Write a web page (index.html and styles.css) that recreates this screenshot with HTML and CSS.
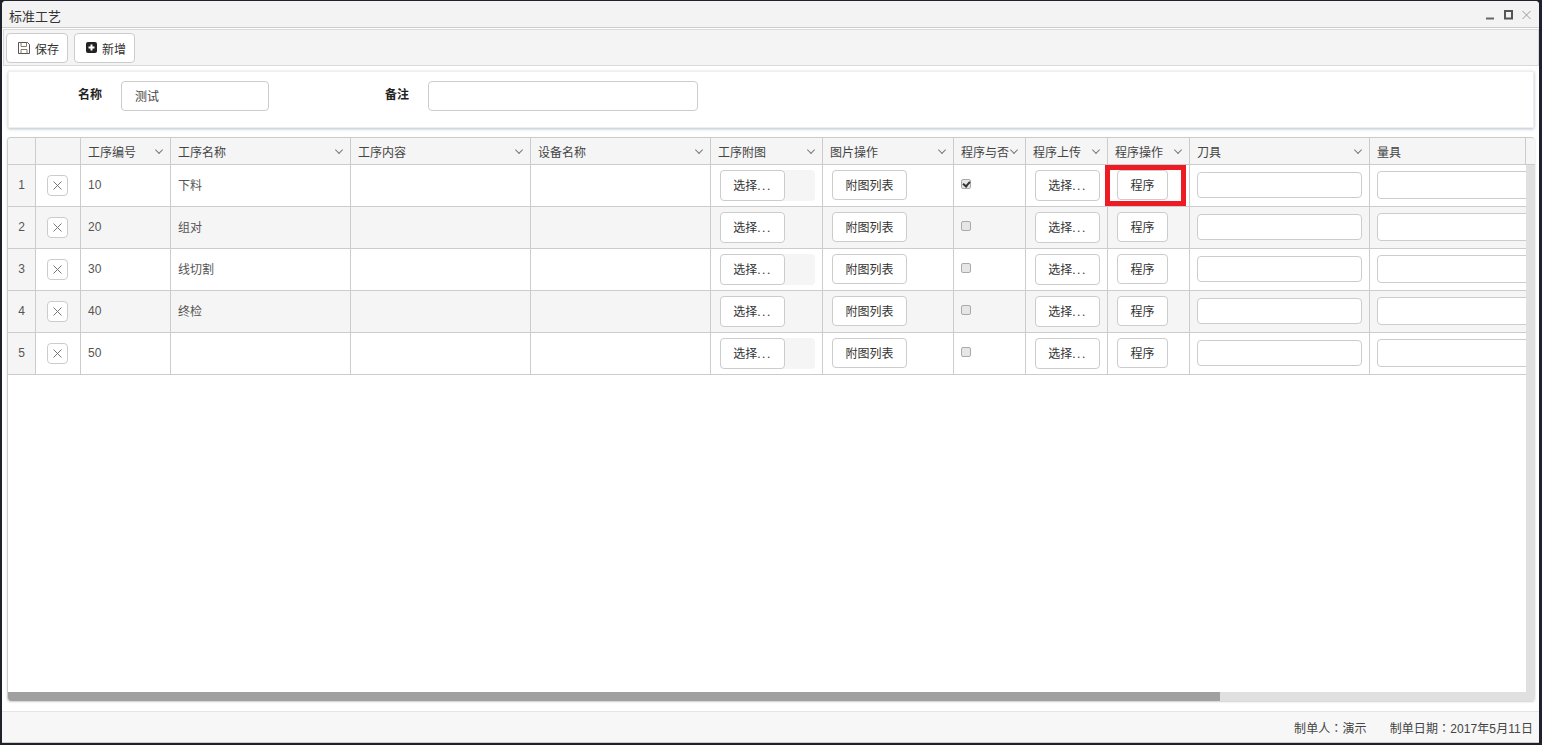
FILE: index.html
```html
<!DOCTYPE html>
<html>

<head>
<meta charset="UTF-8"/>
<title>标准工艺</title>
<link rel="stylesheet" href="styles.css">
</head>

<body>
<div class="window">

<div class="titlebar">
    <span class="title">标准工艺</span>
    <span class="win-btns">
        <svg class="win-min" width="8" height="10" viewBox="0 0 8 10"><path d="M0 8.500h8" stroke="#666" stroke-width="2"/></svg>
        <svg width="9" height="10" viewBox="0 0 9 10"><rect x="1" y="1" width="7" height="7.500" fill="none" stroke="#555" stroke-width="2"/></svg>
        <svg width="9" height="10" viewBox="0 0 9 10"><path d="M.5 1l8 8M8.500 1l-8 8" stroke="#999" stroke-width="1" fill="none"/></svg>
    </span>
</div>

<div class="toolbar">
    <button class="btn tool-btn">
        <svg width="12" height="12" viewBox="0 0 12 12"><path d="M.5.5h9l2 2v9H.5z" fill="none" stroke="#555"/><path d="M3 .5v4h5.500v-4M3 11.500V7.500h6v4" fill="none" stroke="#8a7a68"/></svg>
        保存
    </button>
    <button class="btn tool-btn">
        <svg width="11" height="12" viewBox="0 0 11 12"><rect width="11" height="11" rx="2" fill="#222"/><path d="M5.500 2.500v6M2.500 5.500h6" stroke="#fff" stroke-width="2"/></svg>
        新增
    </button>
</div>

<div class="main">
    <div class="form-panel">
        <label class="form-label first">名称</label>
        <input class="text-input name-input" type="text" value="测试">
        <label class="form-label">备注</label>
        <input class="text-input note-input" type="text">
    </div>

    <div class="grid">
        <div class="grid-top">
            <div class="viewport">
                <table class="sheet">
                    <colgroup>
                        <col class="c-no"><col class="c-del"><col class="c-code"><col class="c-wide"><col class="c-wide"><col class="c-wide">
                        <col class="c-pic"><col class="c-picop"><col class="c-flag"><col class="c-up"><col class="c-up"><col class="c-wide"><col class="c-last">
                    </colgroup>
                    <thead>
                        <tr>
                            <th></th>
                            <th></th>
                            <th><span class="th-in">工序编号<i class="chev"></i></span></th>
                            <th><span class="th-in">工序名称<i class="chev"></i></span></th>
                            <th><span class="th-in">工序内容<i class="chev"></i></span></th>
                            <th><span class="th-in">设备名称<i class="chev"></i></span></th>
                            <th><span class="th-in">工序附图<i class="chev"></i></span></th>
                            <th><span class="th-in">图片操作<i class="chev"></i></span></th>
                            <th><span class="th-in">程序与否<i class="chev"></i></span></th>
                            <th><span class="th-in">程序上传<i class="chev"></i></span></th>
                            <th><span class="th-in">程序操作<i class="chev"></i></span></th>
                            <th><span class="th-in">刀具<i class="chev"></i></span></th>
                            <th><span class="th-in">量具</span></th>
                        </tr>
                    </thead>
                    <tbody>
                        <tr>
                            <td class="rownum">1</td>
                            <td class="center"><button class="del-btn"><svg width="9" height="9" viewBox="0 0 9 9"><path d="M.5.5l8 8M8.500.5l-8 8" stroke="#777" fill="none"/></svg></button></td>
                            <td>10</td><td>下料</td><td></td><td></td>
                            <td class="pad"><div class="upload"><button class="btn pick-btn">选择<span class="dots">...</span></button></div></td>
                            <td class="pad"><button class="btn list-btn">附图列表</button></td>
                            <td class="pad-check"><input class="check" type="checkbox" checked></td>
                            <td class="pad"><button class="btn pick-btn">选择<span class="dots">...</span></button></td>
                            <td class="pad"><button class="btn prog-btn">程序</button></td>
                            <td class="pad-input"><input class="text-input cell-input" type="text"></td>
                            <td class="pad-input"><input class="text-input cell-input long" type="text"></td>
                        </tr>
                        <tr>
                            <td class="rownum">2</td>
                            <td class="center"><button class="del-btn"><svg width="9" height="9" viewBox="0 0 9 9"><path d="M.5.5l8 8M8.500.5l-8 8" stroke="#777" fill="none"/></svg></button></td>
                            <td>20</td><td>组对</td><td></td><td></td>
                            <td class="pad"><div class="upload"><button class="btn pick-btn">选择<span class="dots">...</span></button></div></td>
                            <td class="pad"><button class="btn list-btn">附图列表</button></td>
                            <td class="pad-check"><input class="check" type="checkbox"></td>
                            <td class="pad"><button class="btn pick-btn">选择<span class="dots">...</span></button></td>
                            <td class="pad"><button class="btn prog-btn">程序</button></td>
                            <td class="pad-input"><input class="text-input cell-input" type="text"></td>
                            <td class="pad-input"><input class="text-input cell-input long" type="text"></td>
                        </tr>
                        <tr>
                            <td class="rownum">3</td>
                            <td class="center"><button class="del-btn"><svg width="9" height="9" viewBox="0 0 9 9"><path d="M.5.5l8 8M8.500.5l-8 8" stroke="#777" fill="none"/></svg></button></td>
                            <td>30</td><td>线切割</td><td></td><td></td>
                            <td class="pad"><div class="upload"><button class="btn pick-btn">选择<span class="dots">...</span></button></div></td>
                            <td class="pad"><button class="btn list-btn">附图列表</button></td>
                            <td class="pad-check"><input class="check" type="checkbox"></td>
                            <td class="pad"><button class="btn pick-btn">选择<span class="dots">...</span></button></td>
                            <td class="pad"><button class="btn prog-btn">程序</button></td>
                            <td class="pad-input"><input class="text-input cell-input" type="text"></td>
                            <td class="pad-input"><input class="text-input cell-input long" type="text"></td>
                        </tr>
                        <tr>
                            <td class="rownum">4</td>
                            <td class="center"><button class="del-btn"><svg width="9" height="9" viewBox="0 0 9 9"><path d="M.5.5l8 8M8.500.5l-8 8" stroke="#777" fill="none"/></svg></button></td>
                            <td>40</td><td>终检</td><td></td><td></td>
                            <td class="pad"><div class="upload"><button class="btn pick-btn">选择<span class="dots">...</span></button></div></td>
                            <td class="pad"><button class="btn list-btn">附图列表</button></td>
                            <td class="pad-check"><input class="check" type="checkbox"></td>
                            <td class="pad"><button class="btn pick-btn">选择<span class="dots">...</span></button></td>
                            <td class="pad"><button class="btn prog-btn">程序</button></td>
                            <td class="pad-input"><input class="text-input cell-input" type="text"></td>
                            <td class="pad-input"><input class="text-input cell-input long" type="text"></td>
                        </tr>
                        <tr>
                            <td class="rownum">5</td>
                            <td class="center"><button class="del-btn"><svg width="9" height="9" viewBox="0 0 9 9"><path d="M.5.5l8 8M8.500.5l-8 8" stroke="#777" fill="none"/></svg></button></td>
                            <td>50</td><td></td><td></td><td></td>
                            <td class="pad"><div class="upload"><button class="btn pick-btn">选择<span class="dots">...</span></button></div></td>
                            <td class="pad"><button class="btn list-btn">附图列表</button></td>
                            <td class="pad-check"><input class="check" type="checkbox"></td>
                            <td class="pad"><button class="btn pick-btn">选择<span class="dots">...</span></button></td>
                            <td class="pad"><button class="btn prog-btn">程序</button></td>
                            <td class="pad-input"><input class="text-input cell-input" type="text"></td>
                            <td class="pad-input"><input class="text-input cell-input long" type="text"></td>
                        </tr>
                    </tbody>
                </table>
            </div>
            <div class="vbar">
                <div class="corner"></div>
                <div class="vtrack"></div>
            </div>
        </div>
        <div class="hbar"><div class="hthumb"></div></div>
    </div>
</div>

<div class="statusbar">
    <span>制单人：演示</span>
    <span>制单日期：2017年5月11日</span>
</div>

</div>

<!-- red marker drawn on top of the screenshot -->
<div class="marker"></div>
</body>

</html>
```

FILE: styles.css
```css
html, body {
    height: 100%;
    margin: 0;
}
body {
    position: relative;
    box-sizing: border-box;
    padding: 1px 3px 2px 2px;
    background: #1f222a;
    color: #444;
    font: 12px "Liberation Sans", "Noto Sans CJK SC", sans-serif;
    overflow: hidden;
}
button, input {
    font: inherit;
    color: inherit;
}

.window {
    height: 100%;
    display: flex;
    flex-direction: column;
    background: #fff;
    border-radius: 4px 4px 0 0;
    overflow: hidden;
}

.titlebar {
    flex: none;
    height: 27px;
    display: flex;
    align-items: center;
    justify-content: space-between;
    padding: 2px 8px 0 7px;
    box-sizing: border-box;
    background: #f3f3f3;
    border-bottom: 1px solid #ccc;
}
.title {
    font-size: 13px;
    color: #333;
}
.win-btns {
    display: flex;
    gap: 9px;
    align-items: center;
}
.win-min {
    margin-right: 1px;
}

.toolbar {
    flex: none;
    height: 37px;
    box-sizing: border-box;
    margin: 1px 0 0 1px;
    display: flex;
    gap: 6px;
    align-items: flex-start;
    padding: 3px 0 0 2px;
    background: #f4f4f4;
    border: 1px solid #d9d9d9;
}

.btn {
    background: #fff;
    border: 1px solid #ccc;
    border-radius: 4px;
    padding: 0 0 2px;
    color: #333;
}
.tool-btn {
    height: 30px;
    padding: 0 8px 0 11px;
    display: flex;
    align-items: center;
    gap: 5px;
}

.main {
    flex: 1;
    min-height: 0;
    display: flex;
    flex-direction: column;
    padding: 5px 4px 10px 5px;
}

.form-panel {
    flex: none;
    height: 57px;
    box-sizing: border-box;
    margin: 0 1px 9px 1px;
    padding-top: 9px;
    display: flex;
    align-items: flex-start;
    background: #fff;
    border: 1px solid #eee;
    box-shadow: 0 1px 3px rgba(90, 110, 130, .45);
}
.form-label {
    width: 140px;
    line-height: 28px;
    text-align: right;
    margin-right: 19px;
    font-weight: bold;
    color: #222;
}
.form-label.first {
    width: 93px;
}

.text-input {
    box-sizing: border-box;
    background: #fff;
    border: 1px solid #ccc;
    border-radius: 4px;
    outline: none;
    padding: 0 13px;
}
.name-input {
    width: 148px;
    height: 30px;
    padding-bottom: 2px;
}
.note-input {
    width: 270px;
    height: 30px;
}

.grid {
    flex: 1;
    min-height: 0;
    display: flex;
    flex-direction: column;
    border-left: 1px solid #ccc;
    border-top: 1px solid #ccc;
    border-radius: 4px;
    overflow: hidden;
    box-shadow: 0 1px 2px rgba(0, 0, 0, .2);
}
.grid-top {
    flex: 1;
    min-height: 0;
    display: flex;
}
.viewport {
    flex: 1;
    min-width: 0;
    overflow: hidden;
}

.sheet {
    table-layout: fixed;
    width: 1518px;
    border-collapse: separate;
    border-spacing: 0;
}
.c-no { width: 28px; }
.c-del { width: 45px; }
.c-code { width: 90px; }
.c-wide { width: 180px; }
.c-pic { width: 112px; }
.c-picop { width: 131px; }
.c-flag { width: 72px; }
.c-up { width: 82px; }
.c-last { width: 156px; }

.sheet th, .sheet td {
    border-right: 1px solid #ccc;
    border-bottom: 1px solid #ccc;
    padding: 0 0 0 7px;
    text-align: left;
    font-weight: normal;
    box-sizing: border-box;
}
.sheet th {
    height: 27px;
    background: #f5f5f5;
    color: #444;
}
.th-in {
    display: flex;
    justify-content: space-between;
    align-items: center;
    padding-right: 7px;
}
.chev {
    width: 5px;
    height: 5px;
    margin: -3px 1px 0 0;
    border-right: 1px solid #777;
    border-bottom: 1px solid #777;
    transform: rotate(45deg) scale(.95);
}

.sheet td {
    height: 42px;
    padding-bottom: 2px;
    background: #fff;
    color: #555;
    overflow: hidden;
}
.sheet td:last-child {
    border-right: 0;
}
.sheet tbody tr:nth-child(even) td {
    background: #f5f5f5;
}
.sheet td.rownum {
    background: #f5f5f5;
    padding: 0 0 2px;
    text-align: center;
}
.sheet td.center {
    padding: 0 1px 1px 0;
    text-align: center;
}
.sheet td.pad {
    padding: 0 0 1px 9px;
}
.sheet td.pad-check {
    padding: 0 0 1px 7px;
}
.sheet td.pad-input {
    padding: 0 0 1px 7px;
}

.del-btn {
    display: inline-flex;
    align-items: center;
    justify-content: center;
    vertical-align: middle;
    width: 21px;
    height: 21px;
    padding: 0;
    background: #fff;
    border: 1px solid #ccc;
    border-radius: 4px;
}
.upload {
    width: 95px;
    height: 31px;
    border-radius: 4px;
    background: #f5f5f5;
}
.pick-btn {
    display: block;
    width: 65px;
    height: 31px;
}
.dots {
    letter-spacing: 1.5px;
}
.list-btn {
    display: block;
    width: 75px;
    height: 30px;
}
.prog-btn {
    display: block;
    width: 51px;
    height: 30px;
}
.check {
    appearance: none;
    display: block;
    position: relative;
    box-sizing: border-box;
    width: 10px;
    height: 10px;
    margin: -2px 0 0;
    background: #e6e6e6;
    border: 1px solid #aaa;
    border-radius: 2px;
}
.check:checked::after {
    content: "";
    position: absolute;
    left: 2px;
    top: 0;
    width: 3px;
    height: 5px;
    border-right: 2px solid #333;
    border-bottom: 2px solid #333;
    transform: rotate(40deg);
}
.cell-input {
    display: block;
    width: 165px;
    height: 26px;
}
.cell-input.long {
    width: 200px;
    height: 28px;
}

.vbar {
    flex: none;
    width: 9px;
    display: flex;
    flex-direction: column;
}
.corner {
    flex: none;
    height: 27px;
    box-sizing: border-box;
    background: #f5f5f5;
    border-bottom: 1px solid #ccc;
}
.vtrack {
    flex: 1;
    background: #e0e0e0;
}
.hbar {
    flex: none;
    height: 9px;
    background: #e0e0e0;
}
.hthumb {
    width: 1212px;
    height: 100%;
    background: #a0a0a0;
}

.statusbar {
    flex: none;
    height: 32px;
    box-sizing: border-box;
    display: flex;
    justify-content: flex-end;
    align-items: center;
    gap: 23px;
    padding-right: 6px;
    background: #f7f7f7;
    border-top: 1px solid #e5e5e5;
    border-bottom: 1px solid #ccc;
    color: #444;
    letter-spacing: .1px;
    font-family: "Liberation Sans", "Noto Sans CJK TC", sans-serif;
}

.marker {
    position: absolute;
    left: 1105px;
    top: 165px;
    width: 81px;
    height: 41px;
    box-sizing: border-box;
    border: 5px solid #ed1c24;
}
```
